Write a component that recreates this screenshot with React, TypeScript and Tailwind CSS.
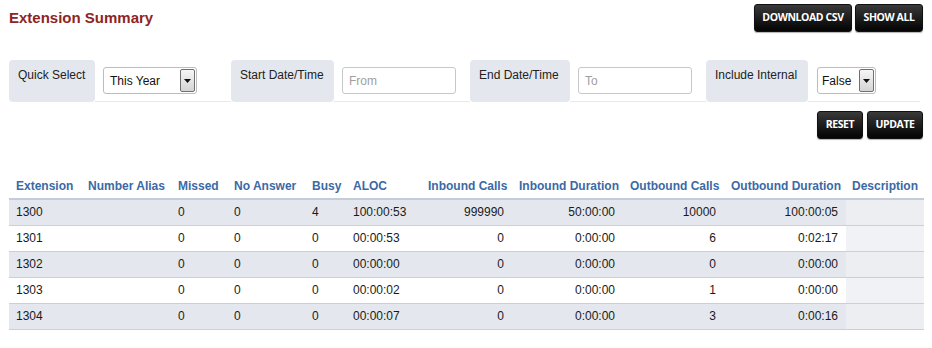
import React from 'react';

const rows = [
  ['1300', '', '0', '0', '4', '100:00:53', '999990', '50:00:00', '10000', '100:00:05'],
  ['1301', '', '0', '0', '0', '00:00:53', '0', '0:00:00', '6', '0:02:17'],
  ['1302', '', '0', '0', '0', '00:00:00', '0', '0:00:00', '0', '0:00:00'],
  ['1303', '', '0', '0', '0', '00:00:02', '0', '0:00:00', '1', '0:00:00'],
  ['1304', '', '0', '0', '0', '00:00:07', '0', '0:00:00', '3', '0:00:16'],
];

const cols = [
  { name: 'Extension', w: 'w-[72px]', right: false },
  { name: 'Number Alias', w: 'w-[90px]', right: false },
  { name: 'Missed', w: 'w-[56px]', right: false },
  { name: 'No Answer', w: 'w-[78px]', right: false },
  { name: 'Busy', w: 'w-[41px]', right: false },
  { name: 'ALOC', w: 'w-[75px]', right: false },
  { name: 'Inbound Calls', w: 'w-[91px]', right: true },
  { name: 'Inbound Duration', w: 'w-[111px]', right: true },
  { name: 'Outbound Calls', w: 'w-[101px]', right: true },
  { name: 'Outbound Duration', w: 'w-[122px]', right: true },
];

function DarkButton({ children, w }: { children: React.ReactNode; w: string }) {
  return (
    <button
      className={`${w} h-[28px] rounded-[3px] border border-[#111] bg-gradient-to-b from-[#3a3a3a] to-[#050505] text-[10.5px] font-bold text-white tracking-[-0.4px] shadow-[0_1px_1px_rgba(0,0,0,0.3)]`}
      style={{ fontFamily: '"Open Sans", "DejaVu Sans", sans-serif' }}
    >
      {children}
    </button>
  );
}

function Arrow() {
  return (
    <span className="flex h-[23px] w-[15px] items-center justify-center rounded-[2px] border border-[#707070] bg-gradient-to-b from-[#f6f6f6] to-[#d4d4d4]">
      <svg width="7" height="4" viewBox="0 0 7 4">
        <path d="M0 0h7L3.5 4z" fill="#111" />
      </svg>
    </span>
  );
}

function Label({ text, w }: { text: string; w: string }) {
  return (
    <div className={`${w} h-[42px] shrink-0 rounded-[4px] bg-[#e4e8ee] px-[9px] pt-[6px] text-[12px] text-[#222]`}>
      {text}
    </div>
  );
}

function Field({ w, children }: { w: string; children: React.ReactNode }) {
  return (
    <div className={`${w} flex h-[42px] shrink-0 items-start border-b border-[#e8e8e8] pl-[8px] pt-[7px]`}>
      {children}
    </div>
  );
}

export default function App() {
  return (
    <div className="h-[348px] w-[932px] bg-white px-[9px] pt-[4px]" style={{ fontFamily: '"Liberation Sans", Arial, sans-serif' }}>
      {/* Header */}
      <div className="flex items-start justify-between">
        <h1 className="pt-[3px] text-[15px] font-bold text-[#8e2424]">Extension Summary</h1>
        <div className="flex gap-[3px]">
          <DarkButton w="w-[98px]">DOWNLOAD CSV</DarkButton>
          <DarkButton w="w-[68px]">SHOW ALL</DarkButton>
        </div>
      </div>

      {/* Filters */}
      <div className="mt-[28px] flex">
        <Label text="Quick Select" w="w-[86px]" />
        <Field w="w-[136px]">
          <div className="flex h-[27px] w-[94px] items-center justify-between rounded-[3px] border border-[#bdbdbd] pl-[6px] pr-[1px] text-[12px] text-[#111]">
            This Year
            <Arrow />
          </div>
        </Field>
        <Label text="Start Date/Time" w="w-[103px]" />
        <Field w="w-[136px]">
          <div className="flex h-[27px] w-[114px] items-center rounded-[3px] border border-[#c8c8c8] pl-[6px] text-[12px] text-[#a0a0a0]">
            From
          </div>
        </Field>
        <Label text="End Date/Time" w="w-[100px]" />
        <Field w="w-[136px]">
          <div className="flex h-[27px] w-[114px] items-center rounded-[3px] border border-[#c8c8c8] pl-[6px] text-[12px] text-[#a0a0a0]">
            To
          </div>
        </Field>
        <Label text="Include Internal" w="w-[102px]" />
        <Field w="w-[112px]">
          <div className="ml-[1px] flex h-[27px] w-[59px] items-center justify-between rounded-[3px] border border-[#bdbdbd] pl-[4px] pr-[1px] text-[12px] text-[#111]">
            False
            <Arrow />
          </div>
        </Field>
      </div>

      <div className="mt-[9px] flex justify-end gap-[4px]">
        <DarkButton w="w-[46px]">RESET</DarkButton>
        <DarkButton w="w-[56px]">UPDATE</DarkButton>
      </div>

      {/* Table */}
      <table className="mt-[38px] w-[915px] table-fixed border-collapse text-[12px]">
        <thead>
          <tr className="border-b-2 border-[#c3ccd8]">
            {cols.map((c) => (
              <th
                key={c.name}
                className={`${c.w} h-[22px] whitespace-nowrap px-[7px] pb-[3px] align-bottom font-bold text-[#3b69a5] ${c.right ? 'text-right' : 'text-left'}`}
              >
                {c.name}
              </th>
            ))}
            <th className="w-[78px] h-[22px] px-[6px] pb-[3px] text-left align-bottom font-bold text-[#3b69a5]">Description</th>
          </tr>
        </thead>
        <tbody>
          {rows.map((r, i) => (
            <tr key={r[0]} className={`border-b border-[#c8d0dc] ${i % 2 === 0 ? 'bg-[#e4e8ee]' : 'bg-white'}`}>
              {r.map((v, j) => (
                <td
                  key={j}
                  className={`h-[26px] whitespace-nowrap px-[7px] text-[#1a1a1a] ${cols[j].right ? 'text-right pr-[8px]' : 'text-left'}`}
                >
                  {v}
                </td>
              ))}
              <td className={`h-[26px] ${i % 2 === 0 ? 'bg-[#eceef2]' : 'bg-[#f0f2f5]'}`}></td>
            </tr>
          ))}
        </tbody>
      </table>
    </div>
  );
}
